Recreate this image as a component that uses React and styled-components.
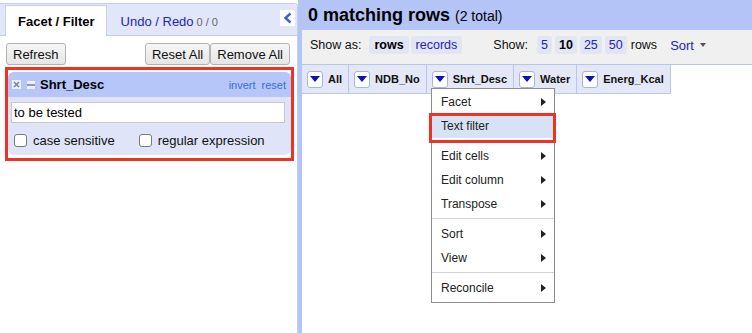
import React from 'react';
import styled, { createGlobalStyle } from 'styled-components';

const GlobalStyle = createGlobalStyle`
  html, body { margin: 0; padding: 0; }
  body { font-family: "Liberation Sans", Arial, sans-serif; background: #fff; color: #000; }
  * { box-sizing: border-box; }
`;

const Page = styled.div`
  position: relative;
  display: flex;
  width: 752px;
  height: 333px;
  overflow: hidden;
`;

/* ---------- left panel ---------- */
const LeftPanel = styled.div`
  width: 298px;
  flex: none;
  padding-top: 3px;
  background: #fff;
  display: flex;
  flex-direction: column;
`;

const Sidebar = styled.div`
  flex: 1;
  border-top: 1px solid #c5cdee;
  border-right: 1px solid #c5cdee;
  border-top-right-radius: 4px;
  display: flex;
  flex-direction: column;
`;

const TabBar = styled.div`
  display: flex;
  align-items: flex-end;
  height: 32px;
  padding-left: 5px;
  background: #e2e6f9;
  border-bottom: 1px solid #c5cdee;
  border-top-right-radius: 4px;
`;

const Tab = styled.div`
  height: 31px;
  margin-bottom: -1px;
  padding: 0 ${p => (p.$active ? 11 : 15)}px 0 ${p => (p.$active ? 12 : 13)}px;
  display: flex;
  align-items: center;
  font-size: 13px;
  font-weight: ${p => (p.$active ? 700 : 400)};
  color: ${p => (p.$active ? '#000' : '#2222c4')};
  background: ${p => (p.$active ? '#fff' : 'transparent')};
  border: 1px solid ${p => (p.$active ? '#c5cdee' : 'transparent')};
  border-bottom: none;
`;

const Count = styled.span`
  font-size: 11px;
  color: #666;
  margin-left: 3px;
  margin-top: 1px;
`;

const CollapseButton = styled.div`
  margin-left: auto;
  margin-right: 2px;
  align-self: flex-start;
  margin-top: 6px;
  width: 15px;
  height: 16px;
  background: #fff;
  display: flex;
  align-items: center;
  justify-content: center;
`;

const ButtonRow = styled.div`
  display: flex;
  justify-content: space-between;
  padding: 0 7px 0 6px;
  margin-top: 7px;
`;

const ButtonGroup = styled.div`
  display: flex;
`;

const Button = styled.div`
  height: 22px;
  padding: 0 6px;
  display: flex;
  align-items: center;
  font-size: 13px;
  color: #111;
  background: linear-gradient(#f6f6f6, #e6e6e6);
  border: 1px solid #b4b4b4;
  border-radius: 3px;
`;

const Highlight = styled.div`
  margin: 2px 3px 0 5px;
  padding: 2px 0 3px 0;
  border: 3px solid #ec3326;
`;

const Facet = styled.div`
  background: #dfe4f8;
  border-radius: 6px;
  overflow: hidden;
`;

const FacetHeader = styled.div`
  height: 25px;
  display: flex;
  align-items: center;
  padding: 0 5px 0 4px;
  background: #b6c6f8;
`;

const FacetTitle = styled.span`
  margin-left: 5px;
  font-size: 13px;
  font-weight: 700;
  color: #000;
`;

const FacetLinks = styled.div`
  margin-left: auto;
  display: flex;
  gap: 6px;
  font-size: 11px;
  color: #3d6bd6;
`;

const FacetBody = styled.div`
  padding: 5px 6px 7px 3px;
`;

const TextInput = styled.input`
  display: block;
  width: 100%;
  height: 21px;
  margin: 0;
  padding: 0 2px;
  font-family: "Liberation Sans", Arial, sans-serif;
  font-size: 13px;
  color: #000;
  background: #fff;
  border: 1px solid #c9c9c9;
  outline: none;
`;

const OptionRow = styled.div`
  display: flex;
  gap: 24px;
  margin: 10px 0 0 3px;
`;

const Option = styled.label`
  display: flex;
  align-items: center;
  gap: 6px;
  font-size: 13px;
  color: #111;
`;

const Check = styled.input.attrs({ type: 'checkbox' })`
  appearance: none;
  margin: 0;
  width: 13px;
  height: 13px;
  background: #fff;
  border: 1px solid #7a7a7a;
  border-radius: 3px;
`;

/* ---------- right panel ---------- */
const Main = styled.div`
  flex: 1;
  display: flex;
  flex-direction: column;
  padding-left: 4px;
  background: #b4c4f7;
`;

const Header = styled.div`
  height: 30px;
  padding-left: 6px;
  line-height: 30px;
  white-space: nowrap;
`;

const Title = styled.span`
  font-size: 18px;
  font-weight: 700;
`;

const Total = styled.span`
  font-size: 14px;
  margin-left: 5px;
`;

const Content = styled.div`
  flex: 1;
  background: #fff;
  display: flex;
  flex-direction: column;
`;

const Toolbar = styled.div`
  height: 35px;
  display: flex;
  align-items: center;
  padding: 0 0 4px 8px;
  background: #f0f0f0;
  border-bottom: 1px solid #b9c5ef;
  font-size: 12.5px;
  white-space: nowrap;
`;

const Label = styled.span`
  color: #111;
  margin-right: ${p => p.$gap || 0}px;
  margin-left: ${p => p.$before || 0}px;
`;

const PillGroup = styled.div`
  display: flex;
  gap: ${p => p.$gap}px;
`;

const Pill = styled.span`
  height: 18px;
  display: flex;
  align-items: center;
  padding: 0 ${p => p.$pad}px;
  border-radius: 3px;
  background: #e2e6f3;
  color: ${p => (p.$current ? '#000' : '#2222c4')};
  font-weight: ${p => (p.$current ? 700 : 400)};
`;

const SortLink = styled.span`
  display: flex;
  align-items: center;
  gap: 6px;
  color: #2222c4;
  font-size: 13px;
  margin-left: 13px;
`;

const Caret = styled.span`
  width: 0;
  height: 0;
  border-left: 3.5px solid transparent;
  border-right: 3.5px solid transparent;
  border-top: 4px solid #555;
`;

const ColumnRow = styled.div`
  display: flex;
  height: 29px;
`;

const ColumnCell = styled.div`
  display: flex;
  align-items: center;
  gap: 5px;
  padding: 0 6px 0 5px;
  background: #e4e7f6;
  border-right: 1px solid #b9c5ef;
  border-bottom: 1px solid #b9c5ef;
  font-size: 11px;
  font-weight: 700;
  color: #111;
`;

const DropButton = styled.span`
  width: 16px;
  height: 17px;
  display: flex;
  align-items: center;
  justify-content: center;
  background: #fff;
  border: 1px solid #a6b5e6;
  border-radius: 3px;
  &::after {
    content: '';
    width: 0;
    height: 0;
    border-left: 5px solid transparent;
    border-right: 5px solid transparent;
    border-top: 6px solid #0f10b8;
  }
`;

const Menu = styled.div`
  position: absolute;
  left: 431px;
  top: 88px;
  width: 124px;
  padding: 1px 0 2px;
  background: #fff;
  border: 1px solid #8c8c8c;
  font-size: 12px;
  color: #222;
`;

const MenuItem = styled.div`
  position: relative;
  height: 24px;
  display: flex;
  align-items: center;
  justify-content: space-between;
  padding: 0 8px 0 9px;
  background: ${p => (p.$selected ? '#d6e2f5' : 'transparent')};
  ${p =>
    p.$selected &&
    `
    &::after {
      content: '';
      position: absolute;
      left: -3px;
      right: -2px;
      top: -1px;
      bottom: -5px;
      border: 3px solid #ec3326;
    }
  `}
`;

const Arrow = styled.span`
  width: 0;
  height: 0;
  border-top: 4px solid transparent;
  border-bottom: 4px solid transparent;
  border-left: 5px solid #222;
`;

const Separator = styled.div`
  height: 1px;
  margin: 2px 0 3px;
  background: #d2d2d2;
`;

const CloseIcon = () => (
  <svg width="9" height="9" viewBox="0 0 9 9">
    <rect width="9" height="9" fill="#eef1fc" />
    <path d="M2 2 L7 7 M7 2 L2 7" stroke="#6b84cf" strokeWidth="1.6" />
  </svg>
);

const MinusIcon = () => (
  <svg width="8" height="8" viewBox="0 0 8 8" style={{ marginLeft: 6 }}>
    <rect width="8" height="8" fill="#eef1fc" />
    <rect x="0" y="3" width="8" height="2" fill="#8797cc" />
  </svg>
);

const Chevron = () => (
  <svg width="10" height="12" viewBox="0 0 10 12">
    <path d="M7.5 1.5 L2.5 6 L7.5 10.5" fill="none" stroke="#3a5fd6" strokeWidth="2.4" />
  </svg>
);

const columns = ['All', 'NDB_No', 'Shrt_Desc', 'Water', 'Energ_Kcal'];

const menu = [
  { label: 'Facet', sub: true },
  { label: 'Text filter', selected: true },
  'sep',
  { label: 'Edit cells', sub: true },
  { label: 'Edit column', sub: true },
  { label: 'Transpose', sub: true },
  'sep',
  { label: 'Sort', sub: true },
  { label: 'View', sub: true },
  'sep',
  { label: 'Reconcile', sub: true },
];

export default function App() {
  return (
    <Page>
      <GlobalStyle />
      <LeftPanel>
        <Sidebar>
          <TabBar>
            <Tab $active>Facet / Filter</Tab>
            <Tab>
              Undo / Redo<Count>0 / 0</Count>
            </Tab>
            <CollapseButton>
              <Chevron />
            </CollapseButton>
          </TabBar>
          <ButtonRow>
            <Button>Refresh</Button>
            <ButtonGroup>
              <Button>Reset All</Button>
              <Button>Remove All</Button>
            </ButtonGroup>
          </ButtonRow>
          <Highlight>
            <Facet>
              <FacetHeader>
                <CloseIcon />
                <MinusIcon />
                <FacetTitle>Shrt_Desc</FacetTitle>
                <FacetLinks>
                  <span>invert</span>
                  <span>reset</span>
                </FacetLinks>
              </FacetHeader>
              <FacetBody>
                <TextInput defaultValue="to be tested" />
                <OptionRow>
                  <Option>
                    <Check />
                    case sensitive
                  </Option>
                  <Option>
                    <Check />
                    regular expression
                  </Option>
                </OptionRow>
              </FacetBody>
            </Facet>
          </Highlight>
        </Sidebar>
      </LeftPanel>
      <Main>
        <Header>
          <Title>0 matching rows</Title>
          <Total>(2 total)</Total>
        </Header>
        <Content>
          <Toolbar>
            <Label $gap={8}>Show as:</Label>
            <PillGroup $gap={2}>
              <Pill $pad={5} $current>rows</Pill>
              <Pill $pad={5}>records</Pill>
            </PillGroup>
            <Label $before={31} $gap={9}>Show:</Label>
            <PillGroup $gap={3}>
              <Pill $pad={4}>5</Pill>
              <Pill $pad={4} $current>10</Pill>
              <Pill $pad={4}>25</Pill>
              <Pill $pad={4}>50</Pill>
            </PillGroup>
            <Label $before={4}>rows</Label>
            <SortLink>
              Sort <Caret />
            </SortLink>
          </Toolbar>
          <ColumnRow>
            {columns.map(c => (
              <ColumnCell key={c}>
                <DropButton />
                {c}
              </ColumnCell>
            ))}
          </ColumnRow>
        </Content>
      </Main>
      <Menu>
        {menu.map((m, i) =>
          m === 'sep' ? (
            <Separator key={i} />
          ) : (
            <MenuItem key={i} $selected={m.selected}>
              {m.label}
              {m.sub && <Arrow />}
            </MenuItem>
          )
        )}
      </Menu>
    </Page>
  );
}
